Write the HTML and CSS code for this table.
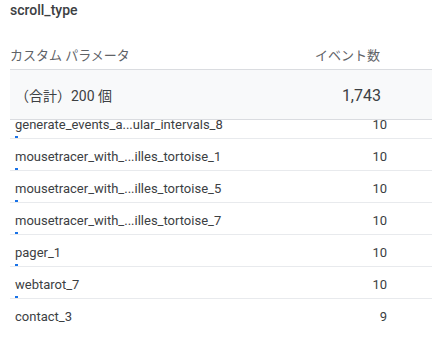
FILE: index.html
```html
<!DOCTYPE html>
<html lang="ja">
<head>
<meta charset="utf-8">
<link rel="stylesheet" href="styles.css">
</head>
<body>
<div class="card">
  <div class="title">scroll_type</div>
  <div class="head">
    <div class="head-label">カスタム パラメータ</div>
    <div class="head-value">イベント数</div>
  </div>
  <div class="total">
    <div class="total-label">（合計）200 個</div>
    <div class="total-value">1,743</div>
  </div>
  <div class="scroller">
    <div class="rows">
      <div class="row"><div class="cell"><div class="label">generate_events_a...ular_intervals_8</div><div class="bar" style="width:3px"></div></div><div class="value">10</div></div>
      <div class="row"><div class="cell"><div class="label">mousetracer_with_...illes_tortoise_1</div><div class="bar" style="width:3px"></div></div><div class="value">10</div></div>
      <div class="row"><div class="cell"><div class="label">mousetracer_with_...illes_tortoise_5</div><div class="bar" style="width:3px"></div></div><div class="value">10</div></div>
      <div class="row"><div class="cell"><div class="label">mousetracer_with_...illes_tortoise_7</div><div class="bar" style="width:3px"></div></div><div class="value">10</div></div>
      <div class="row"><div class="cell"><div class="label">pager_1</div><div class="bar" style="width:3px"></div></div><div class="value">10</div></div>
      <div class="row"><div class="cell"><div class="label">webtarot_7</div><div class="bar" style="width:3px"></div></div><div class="value">10</div></div>
      <div class="row"><div class="cell"><div class="label">contact_3</div><div class="bar" style="width:3px"></div></div><div class="value">9</div></div>
    </div>
  </div>
</div>
</body>
</html>
```
FILE: styles.css
```css
html, body {
  margin: 0;
  padding: 0;
  background: #ffffff;
}
body {
  font-family: Roboto, "Noto Sans CJK JP", sans-serif;
  color: #3c4043;
}
.card {
  padding: 0 2px 0 10px;
}
.title {
  font-size: 14px;
  font-weight: 500;
  line-height: 20px;
  color: #3c4043;
}
.head {
  display: flex;
  justify-content: space-between;
  padding: 28px 52px 5px 0;
  border-bottom: 1px solid #dadce0;
  font-size: 13px;
  line-height: 16px;
  color: #5f6368;
}
.total {
  display: flex;
  justify-content: space-between;
  align-items: center;
  height: 50px;
  padding: 0 51px 0 5px;
  background: #f8f9fa;
  border-bottom: 1px solid #dadce0;
  box-sizing: border-box;
}
.total-label {
  font-size: 14px;
  line-height: 20px;
  color: #3c4043;
  margin-top: 2px;
}
.total-value {
  font-size: 16px;
  line-height: 20px;
  color: #3c4043;
  margin-top: 2px;
}
.scroller {
  height: 207px;
  overflow: hidden;
}
.rows {
  margin-top: -13px;
}
.row {
  display: flex;
  justify-content: space-between;
  padding: 10px 45px 0 5px;
  border-bottom: 1px solid #e8eaed;
  font-size: 13px;
  line-height: 16px;
  color: #3c4043;
}
.cell {
  display: flex;
  flex-direction: column;
}
.bar {
  height: 2px;
  margin-top: 3px;
  background: #1a73e8;
}
.value {
  color: #3c4043;
}
```
